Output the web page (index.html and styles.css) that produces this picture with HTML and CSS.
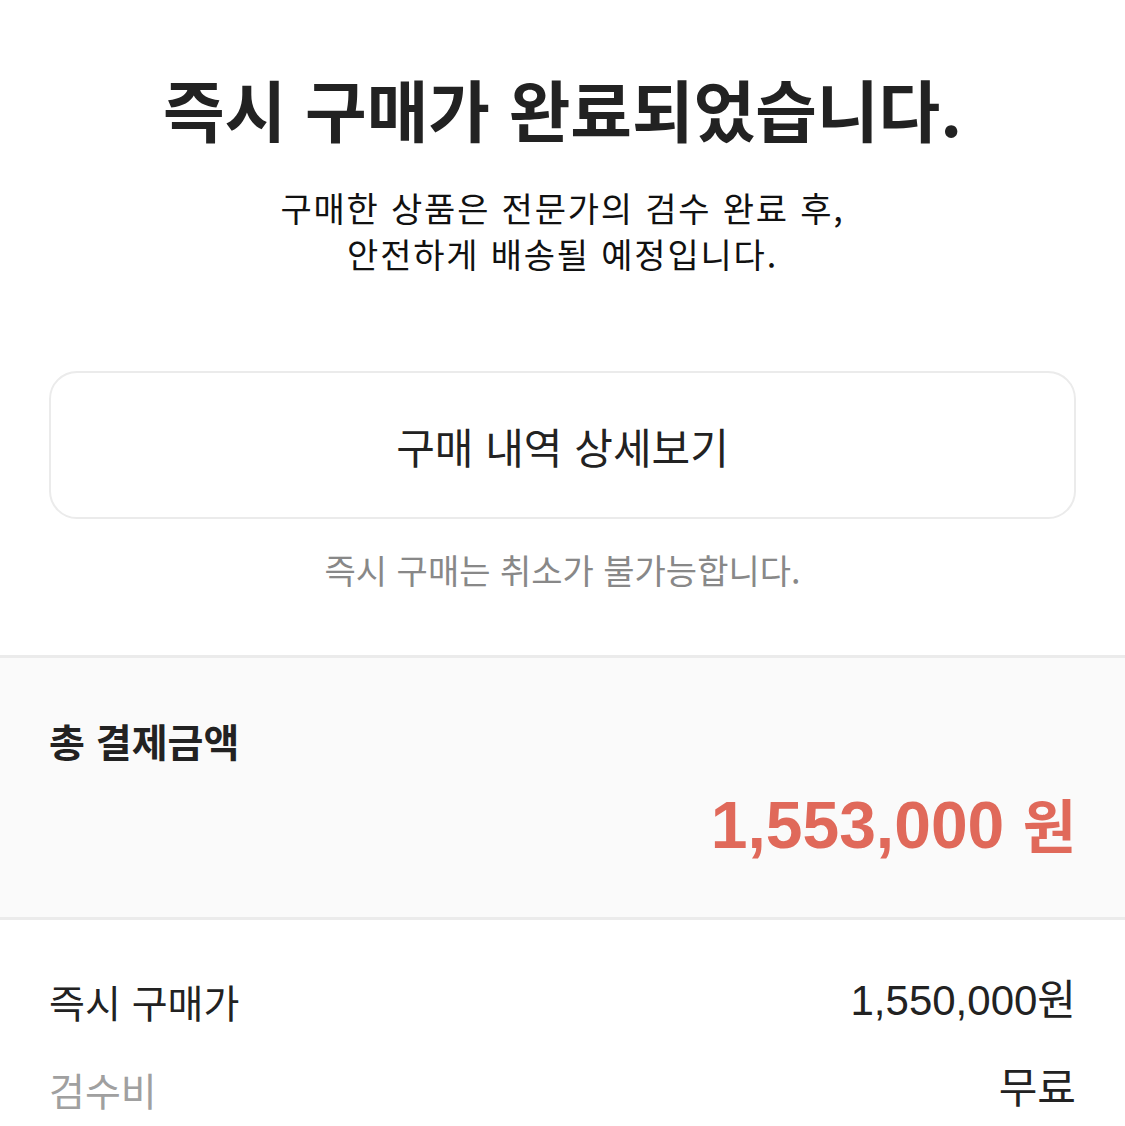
FILE: index.html
```html
<!DOCTYPE html>
<html lang="ko">
<head>
  <meta charset="UTF-8">
  <meta name="viewport" content="width=device-width, initial-scale=1.0">
  <title>즉시 구매 완료</title>
  <link rel="stylesheet" href="styles.css">
</head>
<body>
  <main>
    <section class="complete">
      <h1 class="complete-title">즉시 구매가 완료되었습니다.</h1>
      <p class="complete-desc">구매한 상품은 전문가의 검수 완료 후,<br>안전하게 배송될 예정입니다.</p>
      <button class="detail-btn" type="button">구매 내역 상세보기</button>
      <p class="complete-note">즉시 구매는 취소가 불가능합니다.</p>
    </section>

    <section class="total">
      <h2 class="total-label">총 결제금액</h2>
      <div class="total-amount">1,553,000 <span class="won">원</span></div>
    </section>

    <section class="breakdown">
      <div class="breakdown-row">
        <span class="row-label">즉시 구매가</span>
        <span class="row-value">1,550,000원</span>
      </div>
      <div class="breakdown-row">
        <span class="row-label muted">검수비</span>
        <span class="row-value">무료</span>
      </div>
    </section>
  </main>
</body>
</html>
```

FILE: styles.css
```css
body {
  margin: 0;
  padding: 0;
  background-color: #fff;
  color: #222;
  font-family: "Noto Sans CJK KR", "Noto Sans", sans-serif;
}
.complete {
  padding: 64px 49px 65px;
  text-align: center;
}
.complete-title {
  margin: 0;
  font-size: 67px;
  line-height: 88px;
  font-weight: 700;
  color: #222;
}
.complete-desc {
  margin: 33px 0 0;
  font-size: 34px;
  line-height: 46px;
  letter-spacing: 1.8px;
  color: #111;
}
.detail-btn {
  display: block;
  width: 100%;
  height: 148px;
  margin-top: 94px;
  background: #fff;
  border: 2px solid #ebebeb;
  border-radius: 28px;
  font-family: inherit;
  font-size: 42px;
  color: #222;
  cursor: pointer;
}
.complete-note {
  margin: 31px 0 0;
  font-size: 34px;
  line-height: 40px;
  color: #888;
}
.total {
  background-color: #fafafa;
  border-top: 3px solid #ebebeb;
  border-bottom: 3px solid #ebebeb;
  padding: 57px 49px 52px;
}
.total-label {
  margin: 0;
  font-size: 39px;
  line-height: 50px;
  font-weight: 700;
  color: #222;
}
.total-amount {
  margin-top: 18px;
  text-align: right;
  font-family: "Liberation Sans", Arial, sans-serif;
  font-size: 66px;
  line-height: 80px;
  font-weight: 700;
  color: #e0695a;
}
.total-amount .won {
  font-family: "Noto Sans CJK KR", sans-serif;
  font-size: 58px;
}
.breakdown {
  padding: 56px 49px 0;
  display: flex;
  flex-direction: column;
  gap: 38px;
}
.breakdown-row {
  display: flex;
  justify-content: space-between;
  align-items: center;
  font-size: 39px;
  line-height: 50px;
  color: #222;
}
.row-label.muted {
  color: #a0a0a0;
}
.row-value {
  font-family: "Liberation Sans", "Noto Sans CJK KR", sans-serif;
  font-size: 42px;
}
```
